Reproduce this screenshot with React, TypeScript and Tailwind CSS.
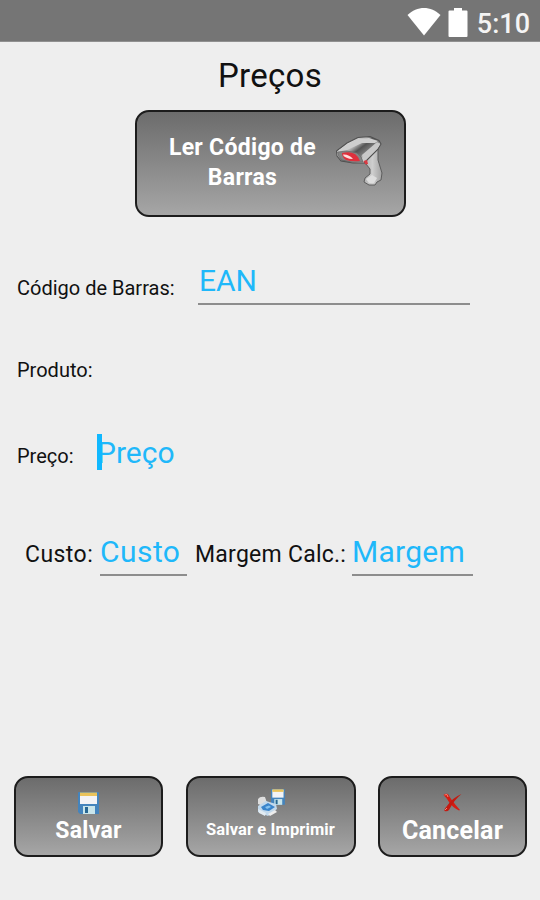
import type { ReactNode } from 'react'
import clsx from 'clsx'

interface ActionButtonProps {
  className?: string
  children: ReactNode
}

function ActionButton({ className, children }: ActionButtonProps) {
  return (
    <button
      type="button"
      className={clsx(
        'shrink-0 rounded-[14px] border-2 border-[#1c1c1c] bg-linear-to-b from-[#6c6c6c] to-[#a6a6a6] font-bold text-white',
        className
      )}
    >
      {children}
    </button>
  )
}

function StatusBar() {
  return (
    <header className="flex h-[42px] items-start justify-end border-b border-[#909090] bg-[#757575] pr-[10px]">
      <svg className="mt-[7px] mr-[7px]" width="34" height="29" viewBox="0 0 34 29" fill="#fff">
        <path d="M0.5 8C10-1.5 24-1.5 33.500 8L17 28.500Z" />
      </svg>
      <svg className="mt-[7px] mr-[9px]" width="20" height="30" viewBox="0 0 20 30" fill="#fff">
        <path d="M6 1h8v2.500h4.500q1 0 1 1V29q0 1-1 1h-17q-1 0-1-1V4.500q0-1 1-1H6Z" />
      </svg>
      <span className="text-[27px] leading-[49px] font-medium text-[#f4f4f4]">5:10</span>
    </header>
  )
}

function ScannerIcon() {
  return (
    <svg width="50" height="54" viewBox="0 0 50 54">
      <defs>
        <linearGradient id="scannerHead" gradientUnits="userSpaceOnUse" x1="17" y1="4" x2="34" y2="26">
          <stop offset="0" stopColor="#dedede" />
          <stop offset="0.25" stopColor="#b5b5b5" />
          <stop offset="0.45" stopColor="#555" />
          <stop offset="0.65" stopColor="#777" />
          <stop offset="0.8" stopColor="#d5d5d5" />
          <stop offset="1" stopColor="#c4c4c4" />
        </linearGradient>
        <linearGradient id="scannerGrip" x1="0" y1="0" x2="1" y2="0">
          <stop offset="0" stopColor="#b0b0b0" />
          <stop offset="0.5" stopColor="#cecece" />
          <stop offset="1" stopColor="#a2a2a2" />
        </linearGradient>
      </defs>
      <path
        d="M28 27L43 12L43 25L47 38L46 45L42 47L40 50L34 50L29 47L30 43L35 39L35 34L31 29Z"
        fill="url(#scannerGrip)"
        stroke="#5d5d5d"
        strokeWidth="1"
        strokeLinejoin="round"
      />
      <path d="M31 44L37 40L42 43L39 48L34 48Z" fill="#dedede" />
      <path
        d="M1.500 16L12 8L23 2.500L35 1.500L44 5.500L46 9L43 14L29 28L18 28L6 26L2 21Z"
        fill="url(#scannerHead)"
        stroke="#505050"
        strokeWidth="1.100"
        strokeLinejoin="round"
      />
      <path d="M4 15L13 9L23 4L34 3L43 6L40 8L27 8L12 15Z" fill="#cfcfcf" />
      <path d="M27 20L42 7L45 9L42 14L29 26.500Z" fill="#c8c8c8" />
      <path d="M2.500 17L12 16L22 18Q27 21 28 27L18 27.500L7 25Q3 22 2.500 17Z" fill="#858585" stroke="#666" strokeWidth="0.700" />
      <path d="M7 18Q15 16 20 19Q24 22 25 26Q17 27 11 25Q7 22 7 18Z" fill="#df303c" />
      <path d="M8 19.500Q14 19 18 24Q14 24 11 22.500Q8 21.500 8 19.500Z" fill="#ffdede" />
      <path d="M28.500 26L32 25L33 29L30.500 29.500Z" fill="#d93a43" />
    </svg>
  )
}

function FloppyShape() {
  return (
    <>
      <path d="M0 1Q0 0 1 0H20Q21 0 21 1V22H2L0 20Z" fill="#4484bd" />
      <path d="M2 1H19V12H2Z" fill="#f3f3f6" />
      <path d="M2 0.500H19V4H2Z" fill="#eac35b" />
      <path d="M5 14H17V22H5Z" fill="#c9e5eb" />
      <path d="M7 15H10V21H7Z" fill="#286793" />
    </>
  )
}

function SaveIcon() {
  return (
    <svg width="21" height="22" viewBox="0 0 21 22">
      <FloppyShape />
    </svg>
  )
}

function SavePrintIcon() {
  return (
    <svg width="28" height="28" viewBox="0 0 28 28">
      <g transform="translate(14 0) scale(0.660 0.720)">
        <FloppyShape />
      </g>
      <path d="M1 10Q3 7 8 8L10 14L6 17L1 15Z" fill="#dedede" />
      <path d="M1 17L9 12L19 15L20 20L11 27L1 23Z" fill="#c2d9ec" />
      <path d="M4 18L11 14L18 18L12 22L6 21Z" fill="#3984cb" />
      <path d="M8 18L12 16.500L14 18L10 20Z" fill="#83c1ef" />
      <path d="M1 20L9 24L8 27L2 24Z" fill="#e2ebf2" />
      <path d="M11 25L18 21L20 23L13 27Z" fill="#ededed" />
    </svg>
  )
}

function CancelIcon() {
  return (
    <svg width="19" height="19" viewBox="0 0 19 19">
      <path d="M0.500 2Q2 0 5 1Q8 7 17 17L16 17.500Q9 14 6 9Q4 5 0.500 2Z" fill="#d51c13" />
      <path d="M18.500 1Q11 7 6 17Q4 19 1.500 18Q1 16 4 13Q9 5 18.500 1Z" fill="#c41a11" />
      <path d="M1.500 2L4 1.500L5 4M2 17L4 15" stroke="#f48373" fill="none" />
    </svg>
  )
}

export default function App() {
  return (
    <div className="flex h-[900px] w-[540px] flex-col overflow-hidden bg-[#eeeeee] font-[Roboto,sans-serif] text-[#111]">
      <StatusBar />

      <h1 className="mt-[14px] text-center text-[33px] leading-[40px] tracking-[0.3px] whitespace-nowrap">Preços</h1>

      <ActionButton className="mt-[14px] ml-[135px] flex h-[107px] w-[271px] items-start pt-[21px] pl-[30px]">
        <span className="w-[151px] text-center text-[23px] leading-[29.500px] tracking-[0.3px] whitespace-nowrap">
          Ler Código de
          <br />
          Barras
        </span>
        <span className="mt-[2px] ml-[17px]">
          <ScannerIcon />
        </span>
      </ActionButton>

      <main className="flex flex-col">
        <div className="mt-[41px] flex h-[47px] pl-[17px]">
          <label className="w-[181px] pt-[18px] text-[20px] leading-[24px] whitespace-nowrap">Código de Barras:</label>
          <div className="h-[47px] w-[272px] border-b-2 border-[#8d8d8d] pl-px text-[30px] leading-[46px] text-[#1fb8fa]">EAN</div>
        </div>

        <div className="mt-[49px] pl-[17px] text-[20px] leading-[32px]">Produto:</div>

        <div className="mt-[44px] flex h-[48px] pl-[17px]">
          <label className="w-[80px] pt-[14px] text-[20px] leading-[24px] whitespace-nowrap">Preço:</label>
          <div className="relative text-[30px] leading-[46px] text-[#1fb8fa]">
            Preço
            <span className="absolute top-[4px] left-0 h-[36px] w-[5px] bg-[#10b8ff]" />
          </div>
        </div>

        <div className="mt-[51px] flex h-[47px] pl-[25px]">
          <label className="w-[75px] pt-[12px] text-[23px] leading-[28px] tracking-[0.45px] whitespace-nowrap">Custo:</label>
          <div className="h-[47px] w-[87px] border-b-2 border-[#8d8d8d] text-[30px] leading-[46px] tracking-[0.45px] text-[#1fb8fa]">Custo</div>
          <label className="ml-[8px] w-[157px] pt-[12px] text-[23px] leading-[28px] tracking-[0.25px] whitespace-nowrap">Margem Calc.:</label>
          <div className="h-[47px] w-[121px] border-b-2 border-[#8d8d8d] text-[30px] leading-[46px] tracking-[0.25px] text-[#1fb8fa]">Margem</div>
        </div>
      </main>

      <footer className="mt-auto mb-[43px] flex justify-between pr-[13px] pl-[14px]">
        <ActionButton className="flex h-[81px] w-[149px] flex-col items-center pt-[14px]">
          <SaveIcon />
          <span className="text-[23px] leading-[33px] tracking-[0.3px]">Salvar</span>
        </ActionButton>
        <ActionButton className="flex h-[81px] w-[170px] flex-col items-center pt-[11px]">
          <SavePrintIcon />
          <span className="text-[16.500px] leading-[25px] tracking-[0.1px] whitespace-nowrap">Salvar e Imprimir</span>
        </ActionButton>
        <ActionButton className="flex h-[81px] w-[149px] flex-col items-center pt-[15px]">
          <CancelIcon />
          <span className="text-[25px] leading-[37px] tracking-[0.2px]">Cancelar</span>
        </ActionButton>
      </footer>
    </div>
  )
}
